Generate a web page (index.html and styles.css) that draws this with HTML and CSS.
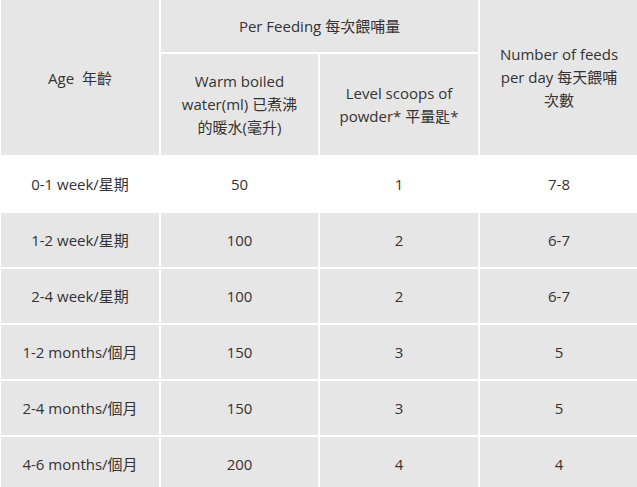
FILE: index.html
```html
<!DOCTYPE html>
<html>
<head>
<meta charset="utf-8">
<link rel="stylesheet" href="styles.css">
</head>
<body>
<table class="feed">
  <colgroup>
    <col class="c1"><col class="c2"><col class="c3"><col class="c4">
  </colgroup>
  <thead>
    <tr class="h1">
      <th rowspan="2">Age&nbsp; 年齡</th>
      <th colspan="2">Per Feeding 每次餵哺量</th>
      <th rowspan="2" class="wide">Number of feeds per day 每天餵哺次數</th>
    </tr>
    <tr class="h2">
      <th>Warm boiled water(ml) 已煮沸的暖水(毫升)</th>
      <th>Level scoops of powder* 平量匙*</th>
    </tr>
  </thead>
  <tbody>
    <tr class="first"><td>0-1 week/星期</td><td>50</td><td>1</td><td>7-8</td></tr>
    <tr><td>1-2 week/星期</td><td>100</td><td>2</td><td>6-7</td></tr>
    <tr><td>2-4 week/星期</td><td>100</td><td>2</td><td>6-7</td></tr>
    <tr><td>1-2 months/個月</td><td>150</td><td>3</td><td>5</td></tr>
    <tr><td>2-4 months/個月</td><td>150</td><td>3</td><td>5</td></tr>
    <tr><td>4-6 months/個月</td><td>200</td><td>4</td><td>4</td></tr>
  </tbody>
</table>
</body>
</html>
```
FILE: styles.css
```css
html, body {
  margin: 0;
  padding: 0;
  background: #ffffff;
  overflow: hidden;
}
.feed {
  font-family: "Open Sans", "Noto Sans CJK TC", sans-serif;
  font-size: 15px;
  color: #333333;
  border-collapse: separate;
  border-spacing: 2px;
  table-layout: fixed;
  width: 641px;
  margin: -2px 0 0 -1px;
  background: #ffffff;
}
.c1 { width: 158px; }
.c2 { width: 157px; }
.c3 { width: 158px; }
.c4 { width: 158px; }
.feed th, .feed td {
  background: #e6e6e6;
  text-align: center;
  vertical-align: middle;
  font-weight: normal;
  padding: 15px 15px;
  line-height: 24px;
}
.feed .h1 th {
  padding: 14px 15px;
  line-height: 24px;
}
.feed .h2 th {
  padding: 16px 15px;
  line-height: 23px;
}
.feed th.wide {
  line-height: 23px;
  padding: 15px 15px;
}
.feed tbody td {
  height: 24px;
}
.feed tr.first td {
  background: #ffffff;
}
```
